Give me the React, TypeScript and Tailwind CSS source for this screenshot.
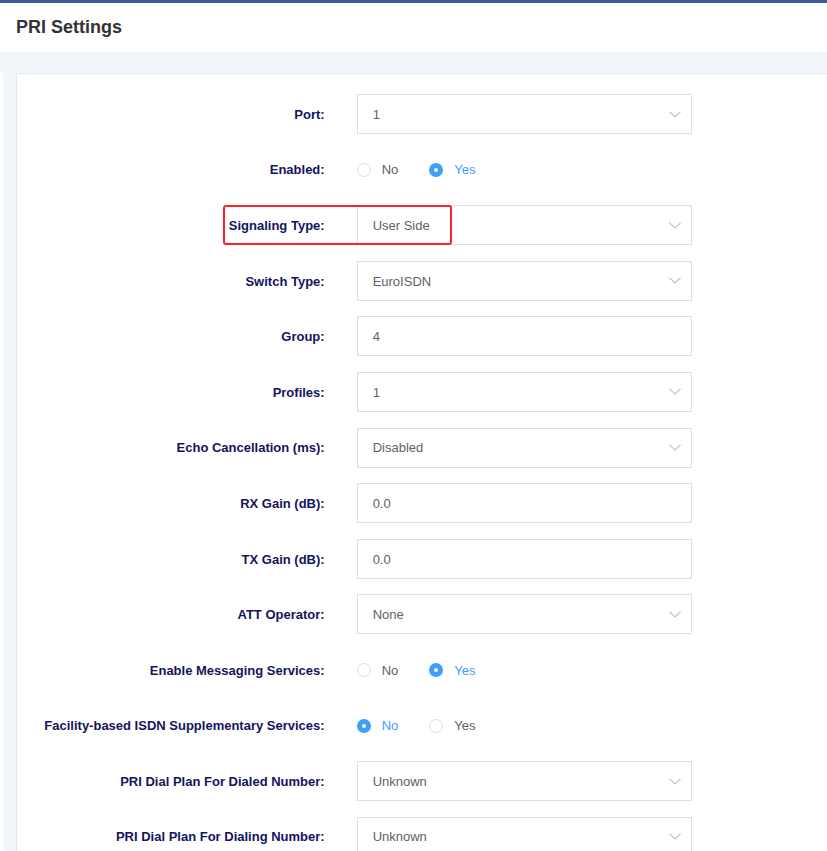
import React from "react";

type Field =
  | { label: string; kind: "select"; value: string; highlight?: boolean }
  | { label: string; kind: "input"; value: string }
  | { label: string; kind: "radio"; value: "No" | "Yes" };

const fields: Field[] = [
  { label: "Port:", kind: "select", value: "1" },
  { label: "Enabled:", kind: "radio", value: "Yes" },
  { label: "Signaling Type:", kind: "select", value: "User Side", highlight: true },
  { label: "Switch Type:", kind: "select", value: "EuroISDN" },
  { label: "Group:", kind: "input", value: "4" },
  { label: "Profiles:", kind: "select", value: "1" },
  { label: "Echo Cancellation (ms):", kind: "select", value: "Disabled" },
  { label: "RX Gain (dB):", kind: "input", value: "0.0" },
  { label: "TX Gain (dB):", kind: "input", value: "0.0" },
  { label: "ATT Operator:", kind: "select", value: "None" },
  { label: "Enable Messaging Services:", kind: "radio", value: "Yes" },
  { label: "Facility-based ISDN Supplementary Services:", kind: "radio", value: "No" },
  { label: "PRI Dial Plan For Dialed Number:", kind: "select", value: "Unknown" },
  { label: "PRI Dial Plan For Dialing Number:", kind: "select", value: "Unknown" },
];

function Chevron() {
  return (
    <svg width="12" height="7" viewBox="0 0 12 7" fill="none">
      <path d="M0.5 0.8 L6 6 L11.5 0.8" stroke="#c0c4cc" strokeWidth="1.2" />
    </svg>
  );
}

function RadioOption({ label, checked }: { label: string; checked: boolean }) {
  return (
    <div className="flex items-center">
      {checked ? (
        <span className="w-[14px] h-[14px] rounded-full bg-[#409eff] flex items-center justify-center">
          <span className="w-[4px] h-[4px] rounded-full bg-white" />
        </span>
      ) : (
        <span className="w-[14px] h-[14px] rounded-full border border-[#dcdfe6] bg-white" />
      )}
      <span
        className={`ml-[11px] text-[13px] ${
          checked ? "text-[#409eff]" : "text-[#606266]"
        }`}
      >
        {label}
      </span>
    </div>
  );
}

function Control({ field }: { field: Field }) {
  if (field.kind === "radio") {
    return (
      <div className="flex items-center gap-[31px] h-[40px] pt-[1px]">
        <RadioOption label="No" checked={field.value === "No"} />
        <RadioOption label="Yes" checked={field.value === "Yes"} />
      </div>
    );
  }

  return (
    <div className="w-[335px] h-[40px] border border-[#dcdfe6] bg-white flex items-center pl-[15px] pr-[10px]">
      <span className="flex-1 text-[13px] text-[#606266] pt-[1px]">{field.value}</span>
      {field.kind === "select" && <Chevron />}
    </div>
  );
}

export default function App() {
  return (
    <div
      className="w-full min-h-screen bg-white overflow-hidden"
      style={{ fontFamily: '"Liberation Sans", Arial, sans-serif' }}
    >
      <div className="h-[3px] bg-[#3d5a9a]" />

      <div className="h-[49px] bg-white flex items-center px-4">
        <h1 className="text-[18px] font-bold text-[#333]">PRI Settings</h1>
      </div>

      <div className="bg-[#f2f5f9] pt-[21px] min-h-[800px]">
        <div className="flex">
          <div className="w-[3px] bg-white" />
          <div className="w-[13px]" />
          <div className="w-[830px] bg-white border-t border-l border-[#e3e8ef] pt-[20px] pb-[40px]">
            <div className="flex flex-col gap-[15.6px]">
              {fields.map((field) => (
                <div key={field.label} className="flex items-center h-[40px]">
                  <div className="w-[308px] text-right text-[13px] font-bold text-[#14145e] pt-[1px]">
                    {field.label}
                  </div>
                  <div className="relative ml-[32px]">
                    {field.kind === "select" && field.highlight && (
                      <div className="absolute left-[-134px] top-[0px] w-[229px] h-[40px] border-2 border-[#ff2424] rounded-[3px] z-10 pointer-events-none" />
                    )}
                    <Control field={field} />
                  </div>
                </div>
              ))}
            </div>
          </div>
        </div>
      </div>
    </div>
  );
}
